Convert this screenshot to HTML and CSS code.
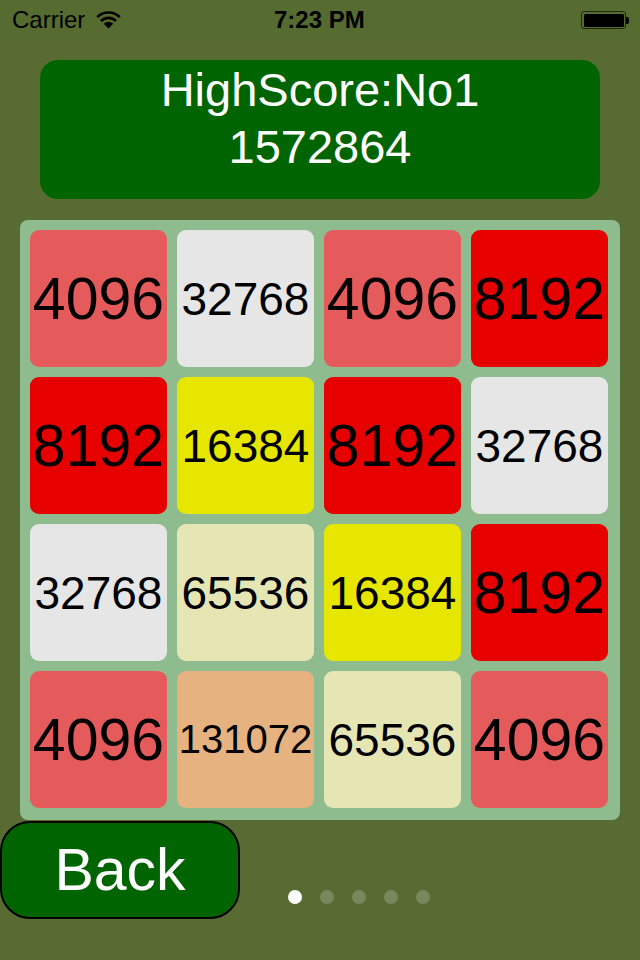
FILE: index.html
```html
<!DOCTYPE html>
<html>
<head>
<meta charset="utf-8">
<link rel="stylesheet" href="styles.css">
</head>
<body>
<div class="screen">
  <div class="status">
    <div class="status-left">
      <span class="carrier">Carrier</span>
      <svg class="wifi" width="25" height="18" viewBox="0 0 25 18">
        <path d="M1.2 6.2 A16 16 0 0 1 23.8 6.2" fill="none" stroke="#000" stroke-width="2.6"/>
        <path d="M5 10 A10.5 10.5 0 0 1 20 10" fill="none" stroke="#000" stroke-width="2.6"/>
        <path d="M12.5 17.5 L7.8 12.8 A6.6 6.6 0 0 1 17.2 12.8 Z" fill="#000"/>
      </svg>
    </div>
    <div class="time">7:23 PM</div>
    <div class="battery">
      <div class="battery-body"><div class="battery-fill"></div></div>
      <div class="battery-nub"></div>
    </div>
  </div>

  <div class="score">
    <div class="score-title">HighScore:No1</div>
    <div class="score-value">1572864</div>
  </div>

  <div class="board">
    <div class="tile t4096 d4">4096</div>
    <div class="tile t32768 d5">32768</div>
    <div class="tile t4096 d4">4096</div>
    <div class="tile t8192 d4">8192</div>

    <div class="tile t8192 d4">8192</div>
    <div class="tile t16384 d5">16384</div>
    <div class="tile t8192 d4">8192</div>
    <div class="tile t32768 d5">32768</div>

    <div class="tile t32768 d5">32768</div>
    <div class="tile t65536 d5">65536</div>
    <div class="tile t16384 d5">16384</div>
    <div class="tile t8192 d4">8192</div>

    <div class="tile t4096 d4">4096</div>
    <div class="tile t131072 d6">131072</div>
    <div class="tile t65536 d5">65536</div>
    <div class="tile t4096 d4">4096</div>
  </div>

  <div class="bottom">
    <button class="back">Back</button>
    <div class="dots">
      <span class="dot active"></span>
      <span class="dot"></span>
      <span class="dot"></span>
      <span class="dot"></span>
      <span class="dot"></span>
    </div>
  </div>
</div>
</body>
</html>
```

FILE: styles.css
```css
html, body {
  margin: 0;
  padding: 0;
  background: #586b33;
}

.screen {
  width: 640px;
  height: 960px;
  background: #586b33;
  font-family: "Liberation Sans", Arial, sans-serif;
  overflow: hidden;
}

.status {
  height: 40px;
  display: flex;
  align-items: center;
  justify-content: space-between;
  padding: 0 11px 0 12px;
  background: #556b2f;
  color: #000;
  position: relative;
}

.status-left {
  display: flex;
  align-items: center;
  gap: 11px;
  width: 160px;
}

.carrier {
  font-size: 24px;
}

.wifi {
  display: block;
  margin-top: -1px;
}

.time {
  font-size: 24px;
  font-weight: bold;
  position: absolute;
  left: 274px;
  top: 0;
  line-height: 40px;
}

.battery {
  display: flex;
  align-items: center;
}

.battery-body {
  width: 45px;
  height: 18px;
  box-sizing: border-box;
  border: 1.5px solid #1f2a0d;
  border-radius: 3px;
  padding: 1.5px;
}

.battery-fill {
  width: 100%;
  height: 100%;
  background: #000;
  border-radius: 1.5px;
}

.battery-nub {
  width: 3px;
  height: 7px;
  background: #000;
  border-radius: 0 2px 2px 0;
}

.score {
  margin: 20px 0 0 40px;
  width: 560px;
  height: 139px;
  box-sizing: border-box;
  padding-top: 1px;
  background: #006400;
  border-radius: 18px;
  color: #fff;
  text-align: center;
  font-size: 47px;
  line-height: 57px;
}

.board {
  margin: 21px 0 0 20px;
  width: 600px;
  height: 600px;
  box-sizing: border-box;
  padding: 10px 12px 12px 10px;
  background: #8fbc8f;
  border-radius: 8px;
  display: grid;
  grid-template-columns: repeat(4, 137px);
  grid-template-rows: repeat(4, 137px);
  gap: 10px;
}

.tile {
  border-radius: 9px;
  display: flex;
  align-items: center;
  justify-content: center;
  color: #000;
  white-space: nowrap;
}

.d4 { font-size: 59px; }
.d5 { font-size: 46px; }
.d6 { font-size: 40px; }

.t4096 { background: #e55b5b; }
.t8192 { background: #e60000; }
.t16384 { background: #e6e600; }
.t32768 { background: #e6e6e6; }
.t65536 { background: #e6e6b4; }
.t131072 { background: #e6b280; }

.bottom {
  display: flex;
  align-items: flex-start;
  margin-top: 1px;
}

.back {
  width: 240px;
  height: 98px;
  box-sizing: border-box;
  background: #006400;
  border: 2px solid #000;
  border-radius: 30px;
  color: #fff;
  font-family: "Liberation Sans", Arial, sans-serif;
  font-size: 59px;
  padding: 0;
  margin: 0;
}

.dots {
  display: flex;
  gap: 18px;
  margin: 69px 0 0 48px;
}

.dot {
  width: 14px;
  height: 14px;
  border-radius: 50%;
  background: rgba(255, 255, 255, 0.2);
}

.dot.active {
  background: #fff;
}
```
